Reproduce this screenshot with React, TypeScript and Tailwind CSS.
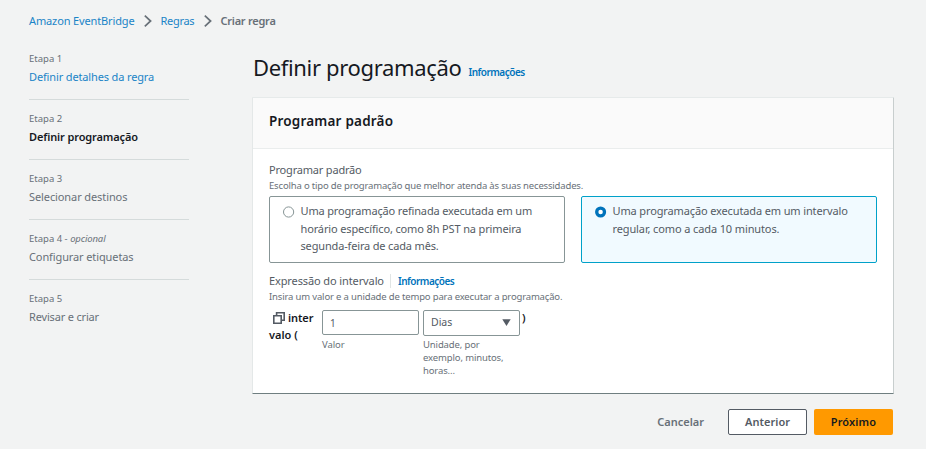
import type { ReactNode } from "react";

function Chevron() {
  return (
    <svg className="h-[12px] w-[8px] shrink-0" viewBox="0 0 8 12" fill="none" stroke="#687078" strokeWidth="1.7">
      <path d="M0.8 0.7 6.6 6 0.8 11.3" />
    </svg>
  );
}

function Step({ label, title, last }: { label: ReactNode; title: ReactNode; last?: boolean }) {
  return (
    <li className={`h-[60px] pt-[10px] text-[#687078] ${last ? "" : "border-b border-[#d5dbdb]"}`}>
      <div className="h-[17px] text-[9.5px] leading-[17px]">{label}</div>
      <div className="mt-px h-[18px] text-[11px] leading-[18px]">{title}</div>
    </li>
  );
}

function Radio({ checked }: { checked?: boolean }) {
  return (
    <svg className="mt-[9px] h-[12px] w-[12px] shrink-0" viewBox="0 0 12 12">
      {checked ? (
        <circle cx="5.6" cy="6" r="3.9" fill="#fff" stroke="#0073bb" strokeWidth="3.3" />
      ) : (
        <circle cx="5.6" cy="6" r="5.1" fill="#fff" stroke="#879596" strokeWidth="1" />
      )}
    </svg>
  );
}

export default function App() {
  return (
    <div
      className="h-[449px] w-[926px] overflow-hidden whitespace-nowrap bg-[#f2f3f3] pl-[29px]"
      style={{ fontFamily: '"Noto Sans", "Open Sans", sans-serif' }}
    >
      <nav className="flex h-[40px] items-center pt-[2px] text-[11px] leading-[16px]">
        <a className="w-[114.5px] tracking-[-0.13px] text-[#1a84c7]">Amazon EventBridge</a>
        <Chevron />
        <a className="ml-[9px] w-[43px] tracking-[-0.31px] text-[#1a84c7]">Regras</a>
        <Chevron />
        <span className="ml-[9px] font-semibold tracking-[-0.25px] text-[#687078]">Criar regra</span>
      </nav>

      <div className="flex">
        <ol className="w-[160px] shrink-0">
          <Step label="Etapa 1" title={<a className="tracking-[-0.14px] text-[#1a84c7]">Definir detalhes da regra</a>} />
          <Step label="Etapa 2" title={<span className="font-semibold tracking-[-0.12px] text-[#16191f]">Definir programação</span>} />
          <Step label="Etapa 3" title={<span className="tracking-[-0.1px]">Selecionar destinos</span>} />
          <Step
            label={<>Etapa 4 - <i className="tracking-[-0.12px]">opcional</i></>}
            title={<span className="tracking-[-0.11px]">Configurar etiquetas</span>}
          />
          <Step label="Etapa 5" title={<span className="tracking-[-0.17px]">Revisar e criar</span>} last />
        </ol>

        <main className="ml-[63px] w-[642px]">
          <div className="flex h-[57px] items-baseline pl-px pt-[12px]">
            <h1 className="text-[22px] leading-[30px] tracking-[-0.34px] text-[#16191f]">Definir programação</h1>
            <a className="ml-[7px] text-[10px] font-semibold tracking-[-0.5px] text-[#0073bb]">Informações</a>
          </div>

          <section className="h-[297px] rounded-[1px] border border-b-[#6f7e80] border-l-[#e4e8e8] border-r-[#c8cece] border-t-[#e6eaea] bg-white">
            <header className="h-[51px] border-b border-[#eaeded] bg-[#fafafa] pl-[16px]">
              <h2 className="pt-[13px] text-[13.5px] font-semibold leading-[20px] tracking-[0.2px] text-[#16191f]">Programar padrão</h2>
            </header>

            <div className="px-[16px] pt-[13px]">
              <div className="h-[16px] text-[11px] leading-[16px] tracking-[-0.19px] text-[#545b64]">Programar padrão</div>
              <div className="h-[14px] text-[9.5px] leading-[16px] tracking-[-0.17px] text-[#687078]">
                Escolha o tipo de programação que melhor atenda às suas necessidades.
              </div>

              <div className="mt-[4px] flex gap-[16px] text-[11px] leading-[17.5px] text-[#545b64]">
                <div className="flex h-[67px] w-[296px] rounded-[2px] border border-[#879596] pl-[13px]">
                  <Radio />
                  <p className="ml-[5.5px] pt-[5px]">
                    <span className="tracking-[-0.16px]">Uma programação refinada executada em um</span>
                    <br />
                    <span className="tracking-[-0.14px]">horário específico, como 8h PST na primeira</span>
                    <br />
                    <span className="tracking-[-0.16px]">segunda-feira de cada mês.</span>
                  </p>
                </div>
                <div className="flex h-[67px] w-[296px] rounded-[2px] border border-[#00a1c9] bg-[#f1faff] pl-[13px]">
                  <Radio checked />
                  <p className="ml-[5.5px] pt-[5px]">
                    <span className="tracking-[-0.13px]">Uma programação executada em um intervalo</span>
                    <br />
                    <span className="tracking-[-0.12px]">regular, como a cada 10 minutos.</span>
                  </p>
                </div>
              </div>

              <div className="mt-[10px] flex h-[16px] items-center text-[11px] leading-[16px]">
                <span className="w-[121px] tracking-[-0.11px] text-[#545b64]">Expressão do intervalo</span>
                <span className="h-[14px] w-px bg-[#e1e5e5]" />
                <a className="ml-[7px] text-[10px] font-semibold tracking-[-0.5px] text-[#0073bb]">Informações</a>
              </div>
              <div className="h-[14px] text-[9.5px] leading-[16px] tracking-[-0.16px] text-[#687078]">
                Insira um valor e a unidade de tempo para executar a programação.
              </div>

              <div className="mt-[7px] flex text-[11px]">
                <div className="-mt-px w-[53px] font-semibold leading-[17px] text-[#16191f]">
                  <div className="flex items-center">
                    <svg className="ml-[4px] mr-[3px] h-[12px] w-[12px]" viewBox="0 0 12 12" fill="none" stroke="#545b64" strokeWidth="1.6">
                      <path d="M3.6 3.4V0.8H11.2V8.2H8.6" />
                      <path d="M0.8 3.8H8.2V11.2H0.8Z" />
                    </svg>
                    <span className="tracking-[-0.1px]">inter</span>
                  </div>
                  <div>valo (</div>
                </div>
                <div className="w-[97px]">
                  <div className="h-[25px] rounded-[2px] border border-[#879596] pl-[7px] text-[10px] leading-[24px] text-[#545b64]">1</div>
                  <div className="mt-[3px] text-[9.5px] leading-[13px] tracking-[-0.1px] text-[#687078]">Valor</div>
                </div>
                <div className="ml-[4px] w-[97px]">
                  <div className="flex h-[26px] items-center justify-between rounded-[2px] border border-[#879596] pl-[7px] pr-[8px] text-[10.5px] text-[#545b64]">
                    <span className="-mt-px leading-[23px]">Dias</span>
                    <svg className="-mt-px h-[7px] w-[9px]" viewBox="0 0 9 7" fill="#545b64">
                      <path d="M0.3 0.2H8.7L4.5 6.9Z" />
                    </svg>
                  </div>
                  <div className="mt-[2px] text-[9.5px] leading-[13px] tracking-[-0.13px] text-[#687078]">
                    Unidade, por
                    <br />
                    exemplo, minutos,
                    <br />
                    horas...
                  </div>
                </div>
                <span className="-mt-px ml-[2px] font-semibold leading-[17px] text-[#16191f]">)</span>
              </div>
            </div>
          </section>

          <footer className="mt-[15px] flex h-[26px] items-center justify-end pr-px text-[11px] font-semibold leading-[24px]">
            <button className="-mt-px mr-[24px] text-[#687078]">Cancelar</button>
            <button className="mr-[7px] h-[26px] w-[79px] rounded-[2px] border border-[#545b64] bg-white pb-px leading-[23px] tracking-[0.03px] text-[#545b64]">
              Anterior
            </button>
            <button className="h-[26px] w-[79px] rounded-[2px] bg-[#ff9900] pb-px leading-[23px] tracking-[0.12px] text-[#16191f]">Próximo</button>
          </footer>
        </main>
      </div>
    </div>
  );
}
